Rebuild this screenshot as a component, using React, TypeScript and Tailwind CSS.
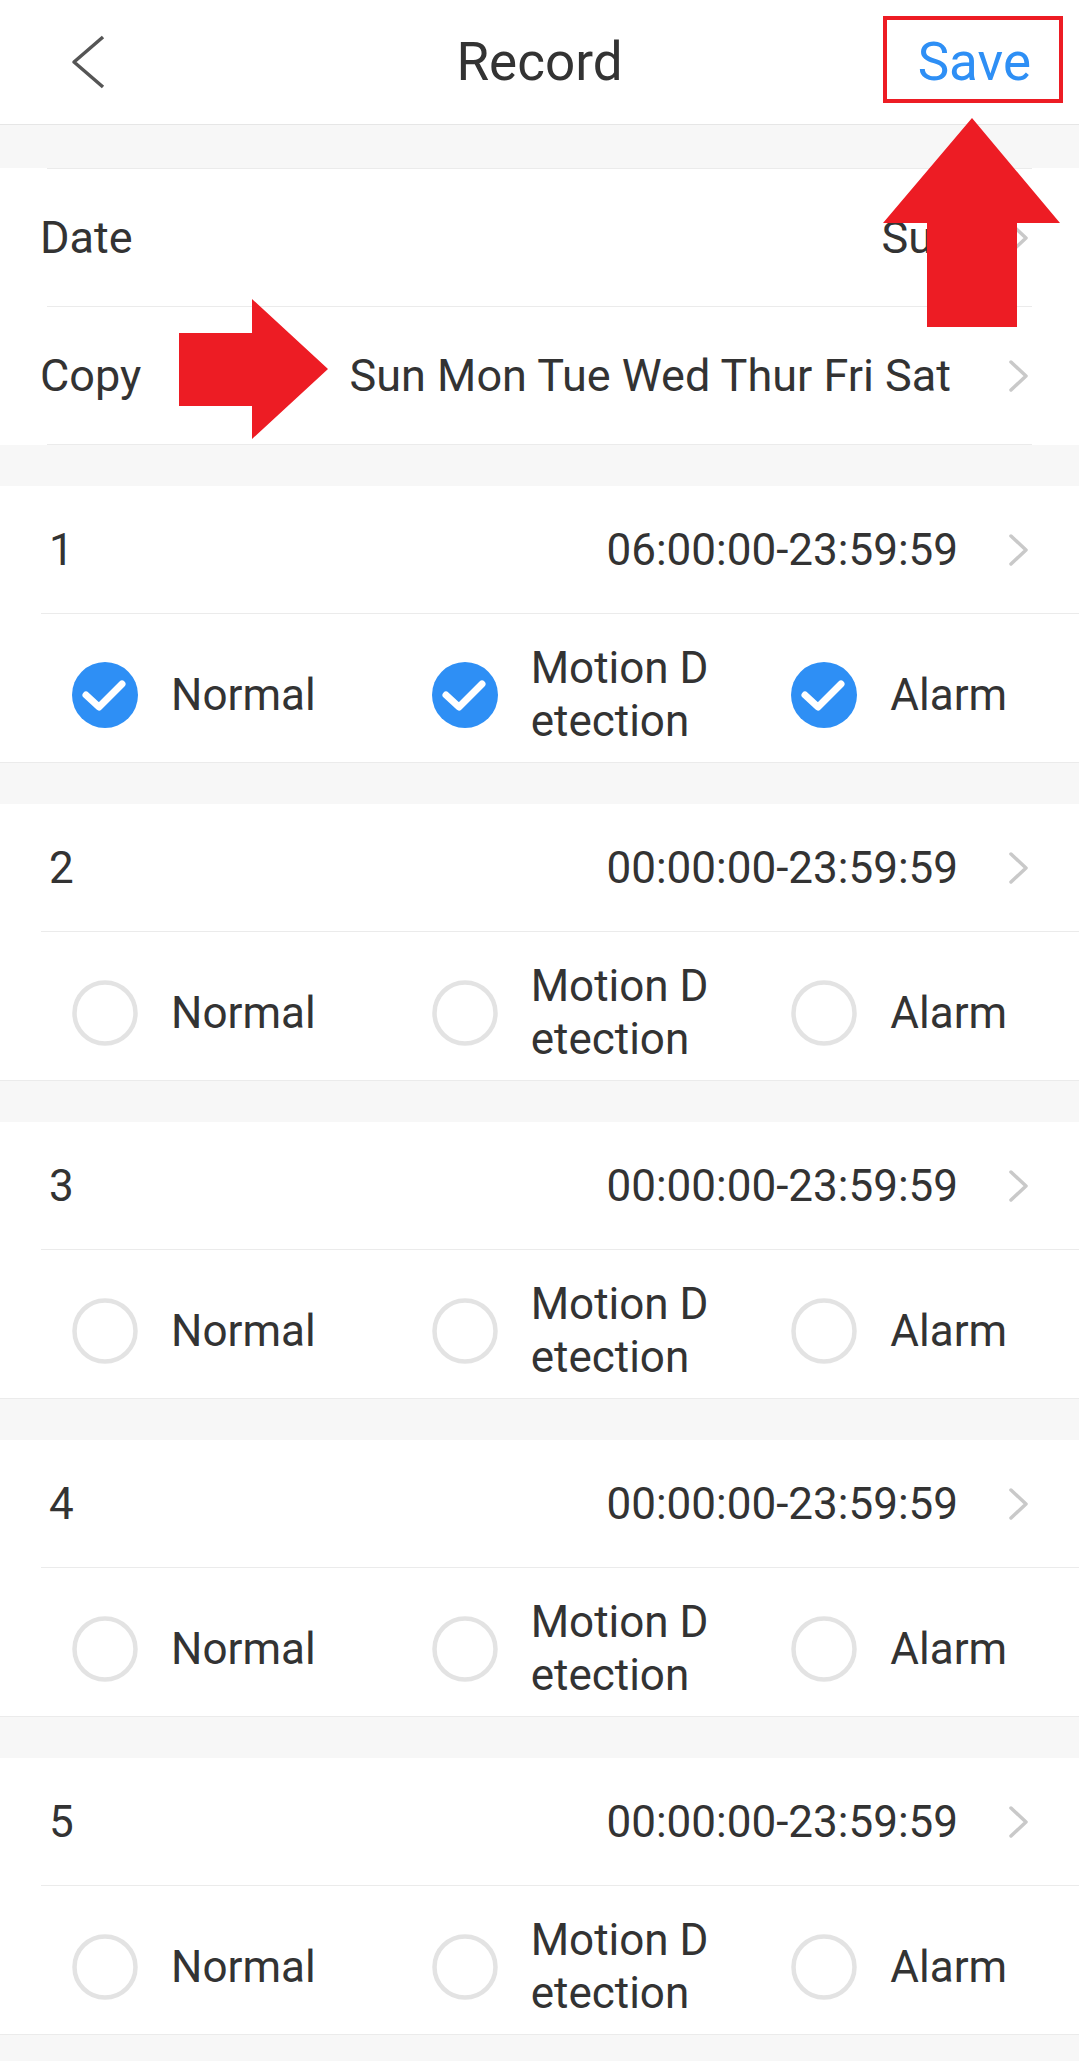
import { Fragment } from "react"

const slots = [
  { id: 1, time: "06:00:00-23:59:59", on: true },
  { id: 2, time: "00:00:00-23:59:59", on: false },
  { id: 3, time: "00:00:00-23:59:59", on: false },
  { id: 4, time: "00:00:00-23:59:59", on: false },
  { id: 5, time: "00:00:00-23:59:59", on: false },
]

function Chevron() {
  return (
    <svg width="20" height="32" viewBox="0 0 20 32" className="shrink-0">
      <polyline points="3,2 18,16 3,30" fill="none" stroke="#c9c9c9" strokeWidth="3.5" strokeLinecap="round" strokeLinejoin="round" />
    </svg>
  )
}

function Check({ on }: { on: boolean }) {
  if (on) {
    return (
      <svg width="66" height="66" viewBox="0 0 66 66" className="shrink-0">
        <circle cx="33" cy="33" r="33" fill="#2e8ff5" />
        <polyline points="14,33 27,45 50,22" fill="none" stroke="#fff" strokeWidth="7" strokeLinecap="round" strokeLinejoin="round" />
      </svg>
    )
  }
  return (
    <svg width="66" height="66" viewBox="0 0 66 66" className="shrink-0">
      <circle cx="33" cy="33" r="30.5" fill="none" stroke="#e3e3e3" strokeWidth="4.5" />
    </svg>
  )
}

function Option({ on, label }: { on: boolean; label: React.ReactNode }) {
  return (
    <div className="flex items-center gap-[33px] pl-[72px]">
      <Check on={on} />
      <span className="text-[44px] leading-[53px] text-[#333]">{label}</span>
    </div>
  )
}

export default function App() {
  return (
    <div className="relative min-h-screen bg-[#f7f7f7] font-[Roboto,sans-serif] text-[#333]">
      {/* Header */}
      <header className="grid h-[125px] grid-cols-[1fr_auto_1fr] items-center border-b border-[#e6e6e6] bg-white">
        <div className="pl-[70px]">
          <svg width="36" height="54" viewBox="0 0 36 54">
            <polyline points="33,2 4,27 33,52" fill="none" stroke="#555" strokeWidth="3.5" strokeLinejoin="round" />
          </svg>
        </div>
        <h1 className="text-[53px] font-normal leading-none text-[#333]">Record</h1>
        <div className="justify-self-end pr-[48px] text-[53px] leading-none text-[#2e8ff5]">Save</div>
      </header>

      {/* Date / Copy */}
      <div className="mt-[43px] bg-white">
        <div className="mx-[47px] border-t border-[#ebebeb]" />
        <div className="flex h-[137px] items-center pl-[40px] pr-[51px] text-[45px]">
          <span>Date</span>
          <span className="ml-auto">Sun</span>
          <span className="ml-[50px]"><Chevron /></span>
        </div>
        <div className="mx-[47px] border-t border-[#ebebeb]" />
        <div className="flex h-[137px] items-center pl-[40px] pr-[51px] text-[45px]">
          <span>Copy</span>
          <span className="ml-auto">Sun Mon Tue Wed Thur Fri Sat</span>
          <span className="ml-[57px]"><Chevron /></span>
        </div>
        <div className="mx-[47px] border-t border-[#ebebeb]" />
      </div>

      {/* Time slots */}
      {slots.map((s) => (
        <Fragment key={s.id}>
          <section className="mt-[41px] border-b border-[#ebebeb] bg-white">
            <div className="flex h-[127px] items-center pl-[49px] pr-[51px] text-[44px]">
              <span>{s.id}</span>
              <span className="ml-auto">{s.time}</span>
              <span className="ml-[50px]"><Chevron /></span>
            </div>
            <div className="ml-[41px] border-t border-[#ebebeb]" />
            <div className="grid h-[148px] grid-cols-3 items-center pt-[14px]">
              <Option on={s.on} label="Normal" />
              <Option on={s.on} label={<>Motion D<br />etection</>} />
              <Option on={s.on} label="Alarm" />
            </div>
          </section>
        </Fragment>
      ))}

      {/* Annotations */}
      <svg className="pointer-events-none absolute left-0 top-0" width="1079" height="460" viewBox="0 0 1079 460">
        <rect x="885" y="18" width="176" height="83" fill="none" stroke="#ed1c24" strokeWidth="4" />
        <polygon points="972,118 1060,223 1017,223 1017,327 927,327 927,223 883,223" fill="#ed1c24" />
        <polygon points="179,333 252,333 252,299 328,369 252,439 252,406 179,406" fill="#ed1c24" />
      </svg>
    </div>
  )
}
